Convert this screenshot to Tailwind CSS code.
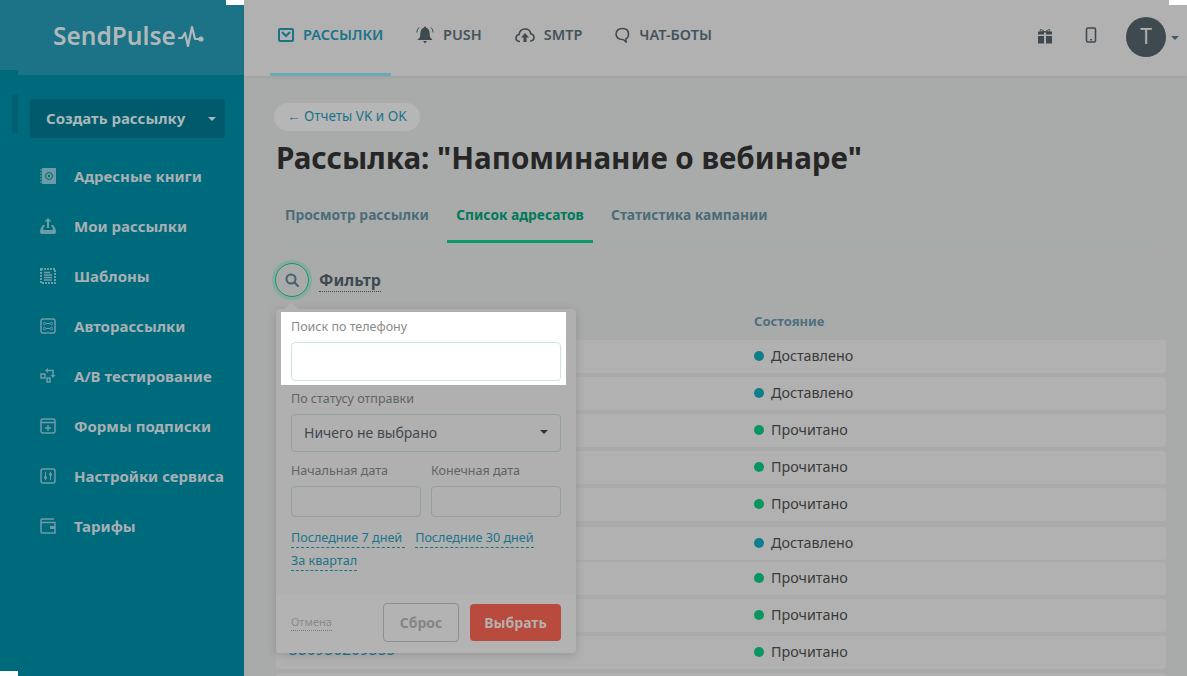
<!DOCTYPE html>
<html lang="ru">
<head>
  <title>SendPulse</title>
  <meta charset="utf-8">
  <script src="https://cdn.jsdelivr.net/npm/@tailwindcss/browser@4"></script>
</head>
<body class="bg-white overflow-hidden font-['Noto_Sans',sans-serif]">
<div class="relative flex w-[1187px] h-[676px] overflow-hidden bg-[#a9abaa]">

  <!-- sidebar -->
  <aside class="w-[244px] shrink-0 flex flex-col bg-[#006a7d]">
    <div class="h-[75px] flex items-center pl-[53px] pb-[3px] bg-[#1c7286] text-[#b0b8ba]">
      <span class="text-[24.500px] leading-none font-semibold">SendPulse</span>
      <svg class="ml-[2px]" width="26" height="24" viewBox="0 0 26 24" fill="none" stroke="#b0b8ba" stroke-width="2.200" stroke-linecap="round" stroke-linejoin="round"><path d="M1 14h3l3-5 3 13 4-19 3 12h6"/><circle cx="23" cy="15" r="1.500" fill="#b0b8ba"/></svg>
    </div>
    <div class="px-[30px] pt-[24px]">
      <button class="w-[195px] h-[39px] flex items-center justify-between pl-4 pr-[9px] rounded-[3px] bg-[#005a6b] text-[15px] font-bold text-[#a8b8bb]">
        Создать рассылку
        <span class="w-0 h-0 border-x-[4px] border-x-transparent border-t-[4px] border-t-[#a8b8bb]"></span>
      </button>
    </div>
    <nav class="pl-[40px] pt-[13px] text-[15px] font-bold text-[#a8b0b3]">
      <a class="h-[50px] flex items-center gap-[18px]">
        <svg width="16" height="16" viewBox="0 0 16 16"><path fill="#6f9ba6" d="M2 0h14v16H2z"/><path stroke="#6f9ba6" d="M0 2h2M0 5h2M0 8h2M0 11h2M0 14h2"/><circle cx="9" cy="8" r="3.500" fill="none" stroke="#006a7d"/><circle cx="9" cy="8" r="1.200" fill="#006a7d"/></svg>
        Адресные книги
      </a>
      <a class="h-[50px] flex items-center gap-[18px]">
        <svg width="16" height="16" viewBox="0 0 16 16" fill="#6f9ba6"><path d="M0 13q0-3 3-6h2l-2 4q0 1 1 1h8q1 0 1-1l-2-4h2q3 3 3 6v1q0 2-2 2H2q-2 0-2-2z"/><path d="M8 0l3.500 3.500H9V10H7V3.500H4.500z"/></svg>
        Мои рассылки
      </a>
      <a class="h-[50px] flex items-center gap-[18px]">
        <svg width="16" height="16" viewBox="0 0 16 16" fill="none"><rect x="1" y="1" width="14" height="14" stroke="#6f9ba6" stroke-width="2" stroke-dasharray="2 1"/><path stroke="#6f9ba6" stroke-width="1.500" d="M4 4.500h6M4 7h8M4 9.500h8M4 12h8"/></svg>
        Шаблоны
      </a>
      <a class="h-[50px] flex items-center gap-[18px]">
        <svg width="16" height="16" viewBox="0 0 16 16" fill="none" stroke="#6f9ba6"><rect x="1" y="1" width="14" height="14" rx="2" stroke-width="1.500"/><path d="M6 5.500h4M6 10.500h4"/><circle cx="4.500" cy="5.500" r="1.200"/><circle cx="11.500" cy="5.500" r="1.200"/><circle cx="4.500" cy="10.500" r="1.200"/><circle cx="11.500" cy="10.500" r="1.200"/></svg>
        Авторассылки
      </a>
      <a class="h-[50px] flex items-center gap-[18px]">
        <svg width="16" height="16" viewBox="0 0 16 16" fill="none" stroke="#6f9ba6" stroke-width="1.500"><rect x="1" y="6" width="4" height="4"/><rect x="7" y="10" width="3" height="4"/><path d="M7 2.500h6V7"/><path fill="#6f9ba6" stroke="none" d="M10.500 7h5L13 10zM5 2.500L8 0v5z"/></svg>
        A/B тестирование
      </a>
      <a class="h-[50px] flex items-center gap-[18px]">
        <svg width="16" height="16" viewBox="0 0 16 16" fill="none" stroke="#6f9ba6" stroke-width="1.500"><rect x="1" y="1" width="14" height="14" rx="2"/><path d="M1 4.500h14M8 7v6M5 10h6"/></svg>
        Формы подписки
      </a>
      <a class="h-[50px] flex items-center gap-[18px]">
        <svg width="16" height="16" viewBox="0 0 16 16" fill="none" stroke="#6f9ba6" stroke-width="1.500"><rect x="1" y="1" width="14" height="14" rx="2"/><path stroke-width="1" d="M5.500 4v8M10.500 4v8"/><path stroke-width="2" d="M4 9.500h3M9 6.500h3"/></svg>
        Настройки сервиса
      </a>
      <a class="h-[50px] flex items-center gap-[18px]">
        <svg width="16" height="16" viewBox="0 0 16 16" fill="none" stroke="#6f9ba6" stroke-width="1.500"><path d="M14 1H2.500Q1 1 1 2.500V14q0 1 1 1h13V4.500H1.500"/><rect x="10" y="8" width="5" height="3" fill="#6f9ba6" stroke="none"/></svg>
        Тарифы
      </a>
    </nav>
  </aside>

  <!-- main column -->
  <div class="flex-1 min-w-0 flex flex-col">
    <header class="h-[76px] shrink-0 flex items-start bg-[#b1b1b1] shadow-[0_1px_3px_rgba(0,0,0,0.08)]">
      <nav class="flex pl-[26px] text-[14.500px] font-semibold text-[#44545c]">
        <a class="w-[121px] h-[76px] pb-[3px] flex items-center gap-[9px] pl-[8px] border-b-[3px] border-[#6ba9b5] text-[#1a7489]">
          <svg width="16" height="14" viewBox="0 0 16 14" fill="none" stroke="#1a7489" stroke-width="2"><rect x="1" y="1" width="14" height="12" rx="1"/><path d="M4 4l4 4 4-4"/></svg>
          РАССЫЛКИ
        </a>
        <a class="h-[76px] pb-[7px] ml-[25px] flex items-center gap-[9px]">
          <svg width="18" height="18" viewBox="0 0 18 18" fill="#3f4a50"><path d="M9 0.500q1 0 1 1 3 1 3.500 4.500L14 11l2.500 3h-15L4 11l.5-5Q5 2.500 8 1.500q0-1 1-1zM7 15h4L9 17.500z"/><path fill="none" stroke="#3f4a50" d="M.8 6.500Q1 3.500 3 1.500M17.200 6.500Q17 3.500 15 1.500"/></svg>
          PUSH
        </a>
        <a class="h-[76px] pb-[7px] ml-[33px] flex items-center gap-[9px]">
          <svg width="20" height="16" viewBox="0 0 20 16" fill="none" stroke="#3f4a50" stroke-width="1.600"><path d="M5 14.500H4.500Q1 14 1 11t3-3.500Q5 2 10 2t6 5q3 .5 3 3.500t-3.500 3.500H15"/><path fill="#3f4a50" stroke="none" d="M10 6l4 4.500h-2.500V15h-3v-4.500H6z"/></svg>
          SMTP
        </a>
        <a class="h-[76px] pb-[7px] ml-[33px] flex items-center gap-[9px]">
          <svg width="15" height="16" viewBox="0 0 15 16" fill="none" stroke="#3f4a50" stroke-width="1.600"><path d="M7.500 1.500q6 0 6 5.500 0 3.500-2.500 4.800V15q-2-2.500-3.500-2.500Q1.500 12.500 1 7q.5-5.500 6.500-5.500z"/></svg>
          ЧАТ-БОТЫ
        </a>
      </nav>
      <div class="ml-auto flex items-center h-[76px] pr-[8px] text-[#3f4a50]">
        <svg width="16" height="16" viewBox="0 0 16 16" fill="#3f4a50" class="mb-[5px]"><path d="M1 7h6V4H1zM9 7h6V4H9zM1 16h6V8.500H1zM9 16h6V8.500H9z" transform="translate(0 -.5)"/><path fill="none" stroke="#3f4a50" d="M8 4Q3 0 3 2.500 3 4 8 4q5 0 5-1.500Q13 0 8 4z"/></svg>
        <svg width="12" height="16" viewBox="0 0 12 16" fill="none" stroke="#3f4a50" stroke-width="1.600" class="ml-[32px] mb-[7px]"><rect x="1.500" y="1" width="9" height="14" rx="1.500"/><path d="M5 12.800h2"/></svg>
        <span class="ml-[29px] w-[40px] h-[40px] mb-[2px] rounded-full bg-[#3f4a50] text-[#b1b1b1] text-[21px] flex items-center justify-center">T</span>
        <span class="ml-[5px] w-0 h-0 border-x-[4px] border-x-transparent border-t-[4px] border-t-[#3f5a68]"></span>
      </div>
    </header>

    <main class="flex-1 min-h-0 pl-[32px] pr-[21px] pt-[27px]">
      <a class="inline-flex items-center h-[28px] pb-[2px] -ml-[2px] px-[13px] rounded-full bg-[#b6b6b6] text-[13.500px] text-[#1a7489]">← Отчеты VK и OK</a>
      <h1 class="mt-[7px] text-[29.600px] leading-[40px] font-bold text-[#262626]">Рассылка: "Напоминание о вебинаре"</h1>
      <div class="mt-[19px] h-[46px] flex border-b border-[#9db0ab] text-[13.800px] font-bold text-[#4b6b78]">
        <a class="w-[171px] pl-[9px] pt-[8px]">Просмотр рассылки</a>
        <a class="w-[146px] h-[46px] text-center pt-[8px] border-b-[3px] border-[#0a9a68] text-[#00795a]">Список адресатов</a>
        <a class="pl-[18px] pt-[8px]">Статистика кампании</a>
      </div>
      <div class="mt-[20px] flex items-center">
        <span class="w-[34px] h-[34px] rounded-full border-[1.500px] border-[#0a9a68] ring-[3px] ring-[#86ab9e] flex items-center justify-center -ml-[1px]">
          <svg width="16" height="16" viewBox="0 0 16 16" fill="none" stroke="#46606e" stroke-width="2"><circle cx="7" cy="7" r="4.500"/><path d="M10.500 10.500L14 14" stroke-linecap="round"/></svg>
        </span>
        <span class="ml-[10px] text-[16px] font-bold text-[#3f4a50] border-b border-dotted border-[#3f4a50] leading-[22px]">Фильтр</span>
      </div>
      <div class="mt-[15px] pl-[478px] h-[28px] text-[13px] font-bold text-[#4e6f7d]">Состояние</div>
      <div class="flex flex-col gap-[4px] text-[14.300px] text-[#3a3a3a]">
        <div class="h-[33px] pb-[2px] flex items-center gap-[7px] pl-[478px] rounded-[4px] bg-[#b1b1b1]"><i class="w-[10px] h-[10px] rounded-full bg-[#0f7e8c]"></i>Доставлено</div>
        <div class="h-[33px] pb-[2px] flex items-center gap-[7px] pl-[478px] rounded-[4px] bg-[#b1b1b1]"><i class="w-[10px] h-[10px] rounded-full bg-[#0f7e8c]"></i>Доставлено</div>
        <div class="h-[33px] pb-[2px] flex items-center gap-[7px] pl-[478px] rounded-[4px] bg-[#b1b1b1]"><i class="w-[10px] h-[10px] rounded-full bg-[#079660]"></i>Прочитано</div>
        <div class="h-[33px] pb-[2px] flex items-center gap-[7px] pl-[478px] rounded-[4px] bg-[#b1b1b1]"><i class="w-[10px] h-[10px] rounded-full bg-[#079660]"></i>Прочитано</div>
        <div class="h-[33px] pb-[2px] flex items-center gap-[7px] pl-[478px] rounded-[4px] bg-[#b1b1b1]"><i class="w-[10px] h-[10px] rounded-full bg-[#079660]"></i>Прочитано</div>
        <div class="h-[33px] pb-[2px] mt-[2px] flex items-center gap-[7px] pl-[478px] rounded-[4px] bg-[#b1b1b1]"><i class="w-[10px] h-[10px] rounded-full bg-[#0f7e8c]"></i>Доставлено</div>
        <div class="h-[33px] pb-[2px] -mt-[2px] flex items-center gap-[7px] pl-[478px] rounded-[4px] bg-[#b1b1b1]"><i class="w-[10px] h-[10px] rounded-full bg-[#079660]"></i>Прочитано</div>
        <div class="h-[33px] pb-[2px] flex items-center gap-[7px] pl-[478px] rounded-[4px] bg-[#b1b1b1]"><i class="w-[10px] h-[10px] rounded-full bg-[#079660]"></i>Прочитано</div>
        <div class="relative h-[33px] pb-[2px] flex items-center gap-[7px] pl-[478px] rounded-[4px] bg-[#b1b1b1]"><span class="absolute left-[13px] top-[2px] text-[15.500px] text-[#1a7489]">380950209555</span><i class="w-[10px] h-[10px] rounded-full bg-[#079660]"></i>Прочитано</div>
        <div class="h-[33px] rounded-[4px] bg-[#b1b1b1]"></div>
      </div>
    </main>
  </div>

  <!-- filter popup -->
  <div class="absolute left-[276px] top-[309px] w-[300px] h-[344px] flex flex-col rounded-[4px] bg-[#b0b0b0] shadow-[0_2px_10px_rgba(0,0,0,0.16)] text-[12.500px] text-[#636363]">
    <span class="absolute -top-[5px] left-[10px] w-[10px] h-[10px] rotate-45 bg-[#b0b0b0]"></span>
    <div class="relative mt-[3px] ml-[5px] mr-[10px] h-[73px] bg-white pl-[10px] pr-[5px] pt-[6px] text-[#8a8a8a]">
      <div class="leading-[18px]">Поиск по телефону</div>
      <div class="mt-[6px] h-[39px] rounded-[4px] border border-[#cfe3e0]"></div>
    </div>
    <div class="px-[15px] flex-1">
      <div class="mt-[5px] leading-[18px]">По статусу отправки</div>
      <div class="mt-[6px] h-[38px] pb-[2px] px-[12px] flex items-center justify-between rounded-[4px] border border-[#93a19f] text-[14px] text-[#3f4a50]">
        Ничего не выбрано
        <span class="w-0 h-0 border-x-[4px] border-x-transparent border-t-[4px] border-t-[#333]"></span>
      </div>
      <div class="mt-[10px] grid grid-cols-2 gap-x-[10px]">
        <div>
          <div class="leading-[18px]">Начальная дата</div>
          <div class="mt-[6px] h-[31px] rounded-[4px] border border-[#93a19f]"></div>
        </div>
        <div>
          <div class="leading-[18px]">Конечная дата</div>
          <div class="mt-[6px] h-[31px] rounded-[4px] border border-[#93a19f]"></div>
        </div>
      </div>
      <div class="mt-[12px] flex flex-wrap gap-x-[10px] gap-y-[4px] text-[12.600px] leading-[18px] text-[#1a7489]">
        <a class="border-b border-dashed border-[#1a7489] pr-[3px]">Последние 7 дней</a>
        <a class="border-b border-dashed border-[#1a7489]">Последние 30 дней</a>
        <a class="border-b border-dashed border-[#1a7489]">За квартал</a>
      </div>
    </div>
    <div class="h-[59px] shrink-0 flex items-center px-[15px] pb-[2px] bg-[#b3b3b3] rounded-b-[4px]">
      <a class="text-[11px] text-[#8b8b8b] border-b border-dotted border-[#777]">Отмена</a>
      <button class="ml-auto w-[76px] h-[39px] rounded-[4px] border border-[#8f8f8f] text-[14px] font-bold text-[#858585]">Сброс</button>
      <button class="ml-[11px] w-[91px] h-[37px] rounded-[4px] bg-[#b84a3e] text-[14px] font-bold text-[#b5b0ac]">Выбрать</button>
    </div>
  </div>

  <!-- white notches left by the tour mask -->
  <span class="absolute left-[226px] top-0 w-[18px] h-[5px] bg-white"></span>
  <span class="absolute left-[1169px] top-0 w-[18px] h-[5px] bg-white"></span>
  <span class="absolute left-0 top-[671px] w-[18px] h-[5px] bg-white"></span>
  <span class="absolute left-0 top-[70px] w-[18px] h-[5px] bg-[#006a7d]"></span>
  <span class="absolute left-[12px] top-[94px] w-[6px] h-[39px] rounded-l-[3px] bg-[#005f71]"></span>
</div>
</body>
</html>
